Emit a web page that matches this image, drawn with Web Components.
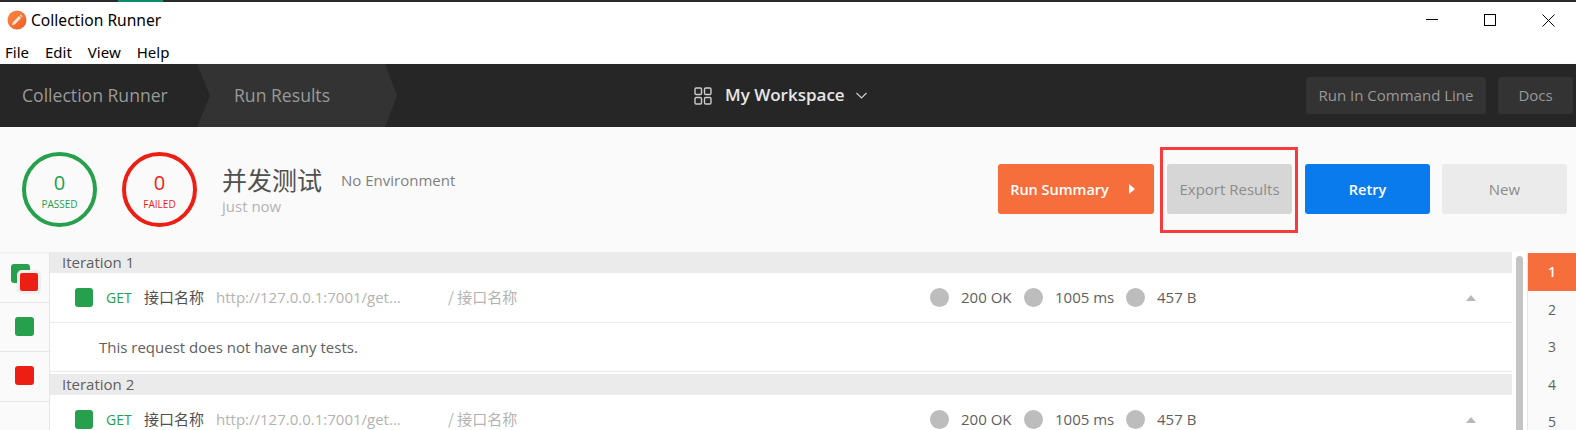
<!DOCTYPE html>
<html><head><meta charset="utf-8">
<style>
html,body{margin:0;padding:0;height:430px;overflow:hidden;background:#fafafa;font-family:"Open Sans","Noto Sans CJK SC",sans-serif}
app-shell{display:block}
</style></head>
<body>
<app-shell></app-shell>
<script>
const FONT='"Open Sans","Noto Sans CJK SC",sans-serif';
function def(name,html){
  customElements.define(name,class extends HTMLElement{
    connectedCallback(){
      if(this.shadowRoot)return;
      const r=this.attachShadow({mode:'open'});
      r.innerHTML=typeof html==='function'?html(this):html;
    }
  });
}
def('title-bar',`<style>
:host{display:block;background:#fff;font-family:"Noto Sans","Noto Sans CJK SC",sans-serif;color:#000}
.strip{height:2px;background:linear-gradient(90deg,#2a2a2a 0 118px,#0f8a6a 118px 163px,#2a2a2a 163px)}
.top{height:36px;display:flex;align-items:center;padding-left:7px;box-sizing:border-box}
.top svg{display:block}
.name{margin-left:4px;font-size:15.6px;line-height:30px}
.ctl{margin-left:auto;display:flex;align-items:center;padding-right:21px;gap:46px}
.menu{height:26px;display:flex;align-items:center;padding-left:5px;font-size:15px;gap:16px;box-sizing:border-box;padding-top:2px}
</style>
<div class="strip"></div>
<div class="top">
<svg width="20" height="20" viewBox="0 0 20 20"><defs><linearGradient id="g" x1="0" y1="0" x2="1" y2="1"><stop offset="0" stop-color="#fb8a4a"/><stop offset="1" stop-color="#ef5a22"/></linearGradient></defs><circle cx="10" cy="10" r="9.5" fill="url(#g)"/><path d="M5 15.2l.9-3 6-6.2 2.1 2.1-6 6.2z" fill="#ffe9dc"/><path d="M12.6 5.3l1.2-1.1 2 2-1.1 1.2z" fill="#ffd0b5"/></svg>
<span class="name">Collection Runner</span>
<div class="ctl">
<svg width="12" height="12" viewBox="0 0 12 12"><path d="M0 5.5h12" stroke="#000" fill="none"/></svg>
<svg width="12" height="12" viewBox="0 0 12 12"><rect x=".5" y=".5" width="11" height="11" stroke="#000" fill="none"/></svg>
<svg width="13" height="13" viewBox="0 0 13 13"><path d="M.5.5l12 12M12.5.5l-12 12" stroke="#000" fill="none"/></svg>
</div></div>
<div class="menu"><span>File</span><span>Edit</span><span>View</span><span>Help</span></div>`);

def('dark-btn',`<style>
:host{display:flex;align-items:center;justify-content:center;height:37px;background:#333;border-radius:3px;color:#999;font-size:15px;box-sizing:border-box;padding-bottom:2px;font-family:${FONT}}
</style><slot></slot>`);

def('app-header',`<style>
:host{display:flex;height:63px;background:#262626;font-family:${FONT};box-shadow:0 1px 2px rgba(0,0,0,.25);position:relative;align-items:center}
.tabs{display:flex;width:397px;height:100%;position:relative;flex:none;font-size:17.6px;color:#999}
.t1{width:197px;padding-left:22px;line-height:62px;box-sizing:border-box;flex:none}
.t2{width:200px;flex:none;background:#333;clip-path:polygon(0 0,188px 0,200px 50%,188px 100%,0 100%,13px 50%);padding-left:37px;line-height:62px;box-sizing:border-box}
.ws{display:flex;align-items:center;margin-left:297px;color:#e6e6e6;font-size:17px;font-weight:600;flex:none}
.ws span{margin:0 11px 2px 13px;line-height:20px}
.right{margin-left:auto;display:flex;gap:12px;padding-right:3px}
dark-btn.a{width:180px}dark-btn.b{width:75px}
</style>
<div class="tabs"><div class="t1">Collection Runner</div><div class="t2">Run Results</div></div>
<div class="ws">
<svg width="18" height="18" viewBox="0 0 18 18" fill="none" stroke="#ccc" stroke-width="1.4"><rect x="1" y="1" width="6.5" height="6.5" rx="1.2"/><rect x="10.5" y="1" width="6.5" height="6.5" rx="1.2"/><rect x="1" y="10.5" width="6.5" height="6.5" rx="1.2"/><rect x="10.5" y="10.5" width="6.5" height="6.5" rx="1.2"/></svg>
<span>My Workspace</span>
<svg width="11" height="7" viewBox="0 0 11 7" fill="none" stroke="#ccc" stroke-width="1.2"><path d="M.5 1l5 5 5-5"/></svg>
</div>
<div class="right"><dark-btn class="a">Run In Command Line</dark-btn><dark-btn class="b">Docs</dark-btn></div>`);

def('stat-circle',h=>{const c=h.getAttribute('color');return `<style>
:host{display:flex;flex:none;width:75px;height:75px;box-sizing:border-box;border:4px solid ${c};border-radius:50%;flex-direction:column;align-items:center;color:${c};font-family:${FONT}}
.n{font-size:20px;line-height:24px;margin-top:15px}
.l{font-size:10px;line-height:12px;margin-top:3px}
</style><div class="n">${h.getAttribute('value')}</div><div class="l">${h.getAttribute('label')}</div>`});

def('act-btn',h=>`<style>
:host{display:flex;flex:none;align-items:center;justify-content:center;height:50px;width:${h.getAttribute('w')||125}px;border-radius:3px;font-size:${h.getAttribute('fs')||15}px;font-family:${FONT};background:${h.getAttribute('bg')};color:${h.getAttribute('fg')};font-weight:${h.getAttribute('fw')||400};box-sizing:border-box;padding-right:${h.getAttribute('pr')||0}px}
</style><slot></slot>`);

def('run-summary',`<style>
:host{display:flex;height:123px;background:#fafafa;position:relative;font-family:${FONT};box-sizing:border-box;padding:25px 9px 0 22px;align-items:flex-start}
stat-circle+stat-circle{margin-left:25px}
.info{margin-left:25px;padding-top:10px;flex:none}
.h{display:flex;align-items:baseline;color:#505050}
.h b{font-weight:400;font-size:25px;line-height:34px;font-family:"Noto Sans CJK SC",sans-serif}
.h i{font-style:normal;font-size:15px;color:#808080;margin-left:19px;position:relative;top:-4px}
.w{font-size:15px;color:#b3b3b3;line-height:20px}
.btns{margin-left:auto;display:flex;gap:13px;margin-top:12px;position:relative}
.arr{display:inline-block;width:0;height:0;border-left:6px solid #fff;border-top:5px solid transparent;border-bottom:5px solid transparent;margin-left:20px}
.mark{position:absolute;left:162px;top:-17px;width:138px;height:86px;border:3px solid #f73a3a;box-sizing:border-box}
.last{margin-left:-1px}
</style>
<stat-circle color="#26a04c" value="0" label="PASSED"></stat-circle>
<stat-circle color="#ed1f14" value="0" label="FAILED"></stat-circle>
<div class="info"><div class="h"><b>并发测试</b><i>No Environment</i></div><div class="w">just now</div></div>
<div class="btns">
<act-btn w="156" pr="7" fs="14.5" bg="#f56e3c" fg="#fff" fw="600">Run Summary<span class="arr"></span></act-btn>
<act-btn bg="#d6d6d6" fg="#8c8c8c">Export Results</act-btn>
<act-btn fs="14.5" bg="#097bed" fg="#fff" fw="600">Retry</act-btn>
<act-btn class="last" bg="#ebebeb" fg="#8c8c8c">New</act-btn>
<div class="mark"></div>
</div>`);

def('iter-sidebar',`<style>
:host{display:block;width:50px;flex:none;background:#fafafa;border-right:1px solid #e6e6e6;box-sizing:border-box;border-top:1px solid #eee;height:200px}
.c{height:49px;border-bottom:1px solid #e6e6e6;display:flex;align-items:center;justify-content:center;position:relative}
.s{width:19px;height:19px;border-radius:3px}
.c>.s{margin-bottom:2px}
.g{background:#26a04c}.r{background:#ed1f14}
.stack{width:30px;height:30px;position:relative;margin:3px 0 0 3px}
.stack .g{position:absolute;left:0;top:0}
.stack .r{position:absolute;left:6px;top:6px;border:3px solid #eee;border-radius:5px;box-sizing:content-box;width:18px;height:18px}
</style>
<div class="c"><div class="stack"><div class="s g"></div><div class="s r"></div></div></div>
<div class="c" style="height:48px"><div class="s g"></div></div>
<div class="c"><div class="s r"></div></div>`);

def('req-row',`<style>
:host{display:flex;align-items:center;height:49px;background:#fff;font-family:${FONT};font-size:14px;box-sizing:border-box;padding-left:25px;flex:none;position:relative}
.sq{width:18px;height:19px;border-radius:3px;background:#26a04c;flex:none}
.m{color:#26a04c;margin-left:13px;width:38px;flex:none}
.n{color:#505050;width:72px;flex:none;font-family:"Noto Sans CJK SC",sans-serif;font-size:15px;padding-bottom:2px}
.u{color:#b3b3b3;width:232px;flex:none;font-size:15px;padding-bottom:2px}
.p{color:#b3b3b3;width:482px;flex:none;font-size:15px;font-family:"Noto Sans CJK SC",sans-serif;padding-bottom:2px}
.d{width:19px;height:19px;border-radius:50%;background:#bdbdbd;flex:none}
.v{color:#606060;font-size:15px;flex:none;margin-left:12px;padding-bottom:2px}
.t{width:0;height:0;border-left:5.5px solid transparent;border-right:5.5px solid transparent;border-bottom:6px solid #b8b8b8;position:absolute;left:1416px;top:22px}
</style>
<div class="sq"></div><div class="m">GET</div><div class="n">接口名称</div><div class="u">http://127.0.0.1:7001/get...</div><div class="p">/ 接口名称</div>
<div class="d"></div><div class="v" style="width:63px">200 OK</div><div class="d"></div><div class="v" style="width:71px">1005 ms</div><div class="d"></div><div class="v">457 B</div><div class="t"></div>`);

def('iter-block',h=>`<style>
:host{display:block;font-family:${FONT}}
.h{height:21px;background:#ebebeb;color:#606060;font-size:15px;line-height:20px;padding-left:12px}
.note{height:48px;background:#fff;border-top:1px solid #ebebeb;border-bottom:1px solid #ebebeb;font-size:15px;color:#606060;line-height:48px;padding-left:49px;margin-bottom:2px}
</style>
<div class="h">${h.getAttribute('label')}</div><req-row></req-row>
<div class="note">This request does not have any tests.</div>`);

def('page-list',`<style>
:host{display:block;width:49px;flex:none;border-left:1px solid #e6e6e6;box-sizing:border-box;background:#fafafa;font-family:${FONT};font-size:14px;color:#606060;text-align:center;margin-top:3px}
div{height:37.5px;line-height:37.5px}
.on{background:#f56e3c;color:#fff;font-weight:600}
</style>
<div class="on">1</div><div>2</div><div>3</div><div>4</div><div>5</div>`);

def('app-shell',`<style>
:host{display:block;height:430px;overflow:hidden}
.body{display:flex;height:180px;background:#fafafa;overflow:hidden}
.main{width:1462px;flex:none;background:#fff;overflow:hidden;margin-top:2px}
.sb{width:15px;flex:none;background:#fff;padding:4px 4px 0 4px;box-sizing:border-box;margin-top:2px}
.sb div{height:200px;width:7px;background:#c4c4c4;border-radius:4px 4px 0 0}
iter-sidebar{margin-top:2px}
</style>
<title-bar></title-bar><app-header></app-header><run-summary></run-summary>
<div class="body"><iter-sidebar></iter-sidebar>
<div class="main"><iter-block label="Iteration 1"></iter-block><iter-block label="Iteration 2"></iter-block></div>
<div class="sb"><div></div></div><page-list></page-list></div>`);
</script>
</body></html>
